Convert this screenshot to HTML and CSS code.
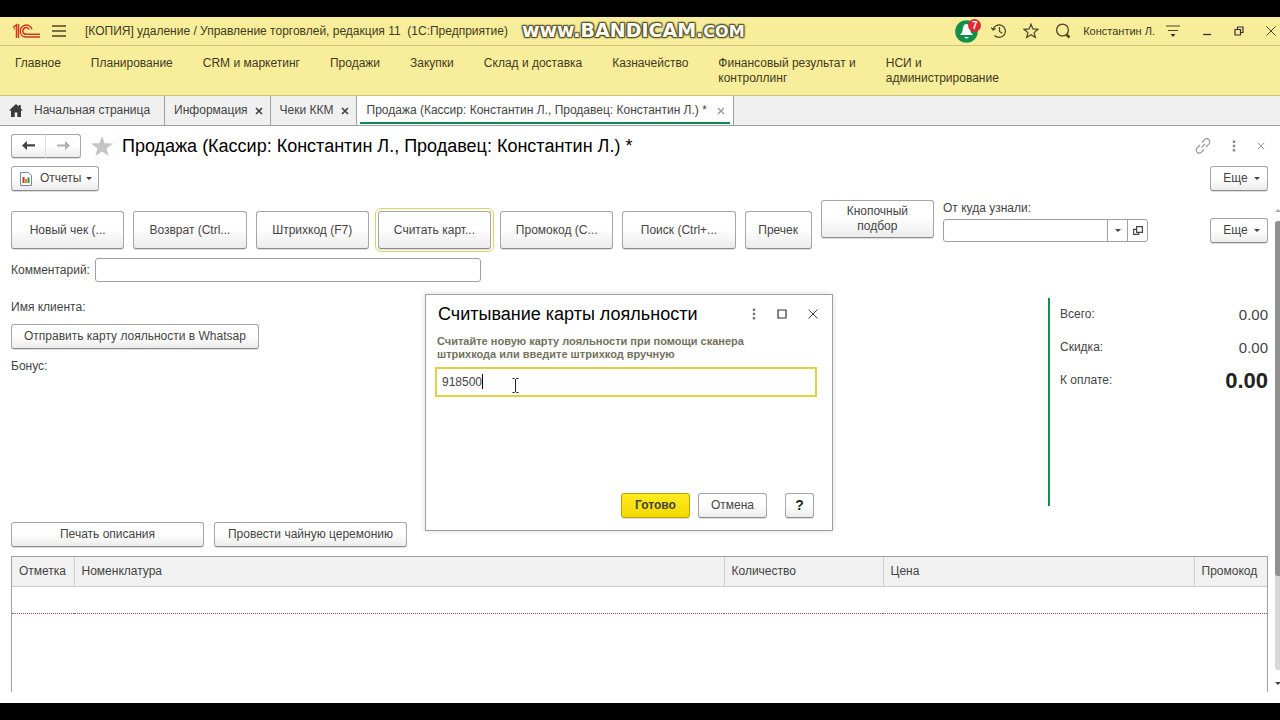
FILE: index.html
```html
<!DOCTYPE html>
<html lang="ru">
<head>
<meta charset="utf-8">
<title>Продажа</title>
<link rel="stylesheet" href="styles.css">
</head>
<body>
<div class="app">
  <header class="titlebar">
    <svg class="logo" width="28" height="16" viewBox="0 0 28 16" fill="none" stroke="#d2391f" stroke-width="1.5"><path d="M1 4.5 4.5 1.8V15M2 6.2l1-.6M6.5 15V1"/><path d="M20 6.2A6 6 0 1 0 14.500 14H28"/><path d="M17.300 6.500A3.400 3.400 0 1 0 14.500 11.300H28"/></svg>
    <button class="plain menu" aria-label="Меню"><svg width="14" height="12" viewBox="0 0 14 12" stroke="#4a4524" stroke-width="1.3"><path d="M0 1h14M0 6h14M0 11h14"/></svg></button>
    <span class="app-title">[КОПИЯ] удаление / Управление торговлей, редакция 11&nbsp; (1С:Предприятие)</span>
    <span class="watermark"><span>www.</span><b>BANDICAM</b><span>.</span><small>COM</small></span>
    <div class="tools">
      <button class="plain bell" aria-label="Уведомления"><svg width="24" height="24" viewBox="0 0 24 24"><circle cx="11.500" cy="12.500" r="11.300" fill="#12904a"/><path d="M11.500 5c3 0 3.500 3 3.800 6 .3 2.600 1.500 3.500 2.900 5H4.800c1.400-1.500 2.600-2.400 2.900-5 .3-3 .8-6 3.800-6z" fill="#fff"/><path d="M9.200 18h4.600q-2.300 3-4.600 0z" fill="#fff"/></svg><span class="badge">7</span></button>
      <button class="plain" aria-label="История"><svg width="16" height="16" viewBox="0 0 16 16" fill="none" stroke="#4a4524" stroke-width="1.200"><path d="M2 6.500A6.300 6.300 0 1 1 3.500 12.500M.3 4.500 2 7l2.700-1.500M8.500 4v4.500l2.700 1.700"/></svg></button>
      <button class="plain" aria-label="Избранное"><svg width="16" height="16" viewBox="0 0 16 16" fill="none" stroke="#4a4524" stroke-width="1.200"><path d="m8 1.200 1.900 4.700 5 .4-3.800 3.300 1.200 4.900L8 11.800l-4.300 2.700 1.200-4.900L1.100 6.300l5-.4z"/></svg></button>
      <button class="plain" aria-label="Поиск"><svg width="16" height="16" viewBox="0 0 16 16" fill="none" stroke="#4a4524" stroke-width="1.300"><circle cx="7.500" cy="7" r="5.900"/><path d="m11.500 11.500 3 3" stroke-width="2.500"/></svg></button>
      <a class="user" href="#">Константин Л.</a>
      <button class="plain" aria-label="Настройки"><svg width="14" height="14" viewBox="0 0 14 14"><path d="M0 2h14M2 6.500h10" stroke="#4a4524" stroke-width="1.200"/><path d="M4.500 10h5L7 13z" fill="#333"/></svg></button>
      <button class="plain win" aria-label="Свернуть"><svg width="10" height="10" viewBox="0 0 10 10" stroke="#333"><path d="M1 8.500h8" stroke-width="1.300"/></svg></button>
      <button class="plain win" aria-label="Восстановить"><svg width="10" height="10" viewBox="0 0 10 10" fill="none" stroke="#333" stroke-width="1.200"><path d="M1 3.500h5.500V9H1zM3.500 3.500V1H9v5.500H6.500"/></svg></button>
      <button class="plain win" aria-label="Закрыть"><svg width="10" height="10" viewBox="0 0 10 10" stroke="#4a4524"><path d="m.5.5 9 9M9.500.5l-9 9"/></svg></button>
    </div>
  </header>

  <nav class="sections">
    <a href="#">Главное</a><a href="#">Планирование</a><a href="#">CRM и маркетинг</a><a href="#">Продажи</a><a href="#">Закупки</a><a href="#">Склад и доставка</a><a href="#">Казначейство</a><a href="#">Финансовый результат и<br>контроллинг</a><a href="#">НСИ и<br>администрирование</a>
  </nav>

  <div class="tabs">
    <a class="tab home" href="#"><svg width="14" height="13" viewBox="0 0 14 13" fill="#3c3c3c"><path d="M7 0 0 6.500h2V13h3.700V8.500h2.600V13H12V6.500h2L11.800 4.400V1H9.900v1.600z"/></svg>Начальная страница</a>
    <div class="tab"><a href="#">Информация</a><button class="plain x" aria-label="Закрыть вкладку"><svg width="8" height="8" viewBox="0 0 8 8" stroke="#444" stroke-width="1.700"><path d="m1 1 6 6M7 1 1 7"/></svg></button></div>
    <div class="tab"><a href="#">Чеки ККМ</a><button class="plain x" aria-label="Закрыть вкладку"><svg width="8" height="8" viewBox="0 0 8 8" stroke="#444" stroke-width="1.700"><path d="m1 1 6 6M7 1 1 7"/></svg></button></div>
    <div class="tab active"><a href="#">Продажа (Кассир: Константин Л., Продавец: Константин Л.) *</a><button class="plain x" aria-label="Закрыть вкладку"><svg width="8" height="8" viewBox="0 0 8 8" stroke="#999" stroke-width="1.400"><path d="m1 1 6 6M7 1 1 7"/></svg></button></div>
  </div>

  <main class="page">
    <div class="row heading">
      <div class="history">
        <button class="btn" aria-label="Назад"><svg width="13" height="9" viewBox="0 0 13 9" fill="#444"><path d="M0 4.500 5 0v3.300h8v2.300H5V9z"/></svg></button><button class="btn" aria-label="Вперед"><svg width="13" height="9" viewBox="0 0 13 9" fill="#b0b0b0"><path d="M13 4.500 8 0v3.600H0v1.800h8V9z"/></svg></button>
      </div>
      <button class="plain" aria-label="В избранное"><svg width="22" height="20" viewBox="0 0 22 20" fill="#c4c4c4"><path d="m11 0 2.700 7.300L22 7.600l-6.500 4.800L17.700 20 11 15.600 4.300 20l2.200-7.600L0 7.600l8.300-.3z"/></svg></button>
      <h1>Продажа (Кассир: Константин Л., Продавец: Константин Л.) *</h1>
      <div class="page-tools">
        <button class="plain" aria-label="Ссылка"><svg width="16" height="16" viewBox="0 0 16 16" fill="none" stroke="#999" stroke-width="1.200"><path d="M6.500 9.500 10 6M7 4.500l2.500-2.700a2.800 2.800 0 0 1 4.500 4L11 9M9 11.500l-2.500 2.700a2.800 2.800 0 0 1-4.500-4L5 7"/></svg></button>
        <button class="plain" aria-label="Еще действия"><svg width="4" height="12" viewBox="0 0 4 12" fill="#888"><path d="M.8.500h2.400v2.400H.8zM.8 4.800h2.400v2.400H.8zM.8 9.100h2.400v2.400H.8z"/></svg></button>
        <button class="plain" aria-label="Закрыть"><svg width="8" height="8" viewBox="0 0 8 8" stroke="#999"><path d="m.8.8 6.400 6.400M7.200.8.8 7.200"/></svg></button>
      </div>
    </div>

    <div class="row reports">
      <button class="btn report"><svg width="12" height="14" viewBox="0 0 12 14"><path d="M.5.500h8l3 3v10H.5z" fill="#fff" stroke="#7b8a98"/><path d="M2.500 5h2v6h-2z" fill="#c33"/><path d="M5 7h2v4H5z" fill="#e08a20"/><path d="M7.500 5.500h2V11h-2z" fill="#3a8a4a"/></svg>Отчеты<i class="caret"></i></button>
      <button class="btn more">Еще<i class="caret"></i></button>
    </div>

    <div class="workspace">
      <div class="form">
        <div class="commands">
          <div class="command-grid">
            <button class="btn tall">Новый чек (...</button>
            <button class="btn tall">Возврат (Ctrl...</button>
            <button class="btn tall">Штрихкод (F7)</button>
            <button class="btn tall current">Считать карт...</button>
            <button class="btn tall">Промокод (C...</button>
            <button class="btn tall">Поиск (Ctrl+...</button>
            <button class="btn tall narrow">Пречек</button>
            <button class="btn tall raised">Кнопочный<br>подбор</button>
            <div class="source">
              <label for="source">От куда узнали:</label>
              <div class="combo"><input id="source" type="text"><button class="plain" aria-label="Выбрать"><i class="caret"></i></button><button class="plain" aria-label="Открыть"><svg width="10" height="10" viewBox="0 0 10 10" fill="none" stroke="#444" stroke-width="1.200"><path d="M3.600.6h5.800v5.800H3.600zM3.600 3.400h-3v5h5v-2"/></svg></button></div>
            </div>
          </div>
          <button class="btn more">Еще<i class="caret"></i></button>
        </div>

        <div class="comment">
          <label for="comment">Комментарий:</label>
          <input id="comment" class="field" type="text">
        </div>

        <div class="middle">
          <div class="client">
            <span>Имя клиента:</span>
            <button class="btn">Отправить карту лояльности в Whatsap</button>
            <span>Бонус:</span>
          </div>
          <dl class="totals">
            <div><dt>Всего:</dt><dd>0.00</dd></div>
            <div><dt>Скидка:</dt><dd>0.00</dd></div>
            <div><dt>К оплате:</dt><dd class="due">0.00</dd></div>
          </dl>
        </div>

        <div class="actions">
          <button class="btn">Печать описания</button>
          <button class="btn">Провести чайную церемонию</button>
        </div>

        <div class="table-box">
          <table>
            <colgroup><col class="c-mark"><col class="c-name"><col class="c-qty"><col class="c-price"><col class="c-promo"></colgroup>
            <thead><tr><th>Отметка</th><th>Номенклатура</th><th>Количество</th><th>Цена</th><th>Промокод</th></tr></thead>
            <tbody><tr><td></td><td></td><td></td><td></td><td></td></tr></tbody>
          </table>
        </div>
      </div>
      <div class="scroll"><i class="up"></i><div class="track"><div class="thumb"></div></div><i class="down"></i></div>
    </div>
  </main>

  <section class="dialog" role="dialog" aria-labelledby="dlg-title">
    <div class="dialog-head">
      <h2 id="dlg-title">Считывание карты лояльности</h2>
      <button class="plain" aria-label="Еще действия"><svg width="4" height="12" viewBox="0 0 4 12" fill="#777"><path d="M.8.500h2.400v2.400H.8zM.8 4.800h2.400v2.400H.8zM.8 9.100h2.400v2.400H.8z"/></svg></button>
      <button class="plain" aria-label="Развернуть"><svg width="10" height="10" viewBox="0 0 10 10" fill="none" stroke="#333" stroke-width="1.200"><path d="M1 1h8v8H1z"/></svg></button>
      <button class="plain" aria-label="Закрыть"><svg width="10" height="10" viewBox="0 0 10 10" stroke="#444"><path d="m.5.5 9 9M9.500.5l-9 9"/></svg></button>
    </div>
    <label class="hint" for="barcode">Считайте новую карту лояльности при помощи сканера<br>штрихкода или введите штрихкод вручную</label>
    <div class="barcode">
      <input id="barcode" type="text" value="918500">
      <i class="text-caret"></i>
      <svg class="pointer" width="7" height="15" viewBox="0 0 7 15" fill="none" stroke="#222"><path d="M.5.500h2l1 1 1-1h2M3.500 1v13M.5 14.500h2l1-1 1 1h2"/></svg>
    </div>
    <div class="dialog-foot">
      <button class="btn primary">Готово</button>
      <button class="btn">Отмена</button>
      <button class="btn help">?</button>
    </div>
  </section>
</div>
</body>
</html>
```
FILE: styles.css
```css
* { box-sizing: border-box; }

body {
  margin: 0;
  background: #000;
  color: #444;
  font: 12px/15px "Liberation Sans", Arial, sans-serif;
}

.app {
  position: relative;
  display: flex;
  flex-direction: column;
  min-height: 100vh;
  padding: 17px 0;
  overflow: hidden;
}

a { color: inherit; text-decoration: none; }
svg { display: block; flex: none; }
button, input { font: inherit; color: inherit; }
h1, h2, dl, dd { margin: 0; font-weight: normal; }

.plain {
  display: flex;
  align-items: center;
  justify-content: center;
  padding: 0;
  border: 0;
  background: none;
}

.btn {
  display: flex;
  align-items: center;
  justify-content: center;
  height: 25px;
  padding: 0 12px;
  border: 1px solid #a6a6a6;
  border-bottom-color: #8c8c8c;
  border-radius: 3px;
  background: linear-gradient(#fff 45%, #ececec);
  box-shadow: 0 1px 0 #ddd;
  white-space: nowrap;
}

.caret {
  border: 3px solid transparent;
  border-top-color: #444;
  border-bottom: 0;
}

/* Window title */
.titlebar {
  display: flex;
  align-items: center;
  height: 29px;
  padding: 0 4px 0 12px;
  border-bottom: 1px solid #cfc478;
  background: #f8ed9a;
  color: #3f3b20;
}

.menu { margin: 0 19px 0 12px; }
.app-title { white-space: nowrap; }

.watermark {
  margin-left: 14px;
  color: #fffdf0;
  font: bold 19px/20px "DejaVu Sans", sans-serif;
  white-space: nowrap;
  text-shadow: 1px 1px 1px #55502c, -1px -1px 1px #55502c, 1px -1px 1px #55502c, -1px 1px 1px #55502c, 0 0 3px #55502c;
}

.watermark small { font-size: 16px; }

.tools {
  display: flex;
  align-items: center;
  gap: 16px;
  margin-left: auto;
}

.bell { position: relative; margin-right: -4px; }

.badge {
  position: absolute;
  top: 0;
  right: -2px;
  width: 13px;
  height: 13px;
  border-radius: 50%;
  background: #e0282e;
  color: #fff;
  font: bold 10px/13px "Liberation Sans", Arial, sans-serif;
}

.user { margin: 0 -5px 0 -4px; font-size: 11px; }
.win { margin-left: 6px; }
.win:first-of-type { margin-left: 4px; }

/* Sections */
.sections {
  display: flex;
  gap: 30px;
  height: 50px;
  padding: 10px 15px 0;
  border-bottom: 1px solid #cfc478;
  background: #f8ed9a;
  color: #3f3b20;
  white-space: nowrap;
}

/* Open windows */
.tabs {
  display: flex;
  height: 30px;
  border-bottom: 1px solid #a0a0a0;
  background: #f0f0f0;
}

.tab {
  display: flex;
  align-items: center;
  gap: 7px;
  padding: 0 7px 0 9px;
  border-right: 1px solid #a0a0a0;
  white-space: nowrap;
}

.home { gap: 11px; padding: 0 14px 0 9px; }

.active {
  gap: 10px;
  padding: 0 8px 0 10px;
  background: linear-gradient(#0c8a50, #0c8a50) 3px 26px / calc(100% - 6px) 2px no-repeat #fff;
}

/* Page */
.page {
  display: flex;
  flex: 1;
  flex-direction: column;
  padding-top: 7px;
  background: #fff;
}

.row { display: flex; align-items: center; padding: 0 12px 0 11px; }
.heading { height: 25px; }
.history { display: flex; margin-right: 10px; }
.history .btn { width: 35px; height: 24px; padding: 0; }
.history .btn:first-child { border-right-color: #ddd; border-radius: 3px 0 0 3px; }
.history .btn:last-child { border-left: 0; border-radius: 0 3px 3px 0; }

h1 {
  margin-left: 9px;
  color: #000;
  font-size: 18px;
  line-height: 20px;
  white-space: nowrap;
}

.page-tools { display: flex; align-items: center; gap: 21px; margin: 0 3px 0 auto; }

.reports { justify-content: space-between; margin-top: 8px; }
.report { gap: 8px; padding: 0 6px 0 8px; }
.report .caret { margin-left: -3px; }
.more { gap: 6px; width: 58px; padding: 0 5px 0 10px; }

.workspace { display: flex; flex: 1; margin-top: 8px; }
.form { display: flex; flex: 1; flex-direction: column; min-width: 0; padding: 0 7px 0 11px; }

.commands { display: flex; align-items: flex-start; justify-content: space-between; gap: 20px; }
.commands > .more { margin-top: 19px; }

.command-grid {
  display: grid;
  flex: 0 1 1137px;
  grid-template-columns: repeat(6, 113fr) 67fr 113fr 204fr;
  column-gap: 9px;
  align-items: start;
}

.tall { height: 38px; margin-top: 12px; padding: 0 4px; }
.raised { margin-top: 1px; }
.current { outline: 1px solid #dcd25c; outline-offset: 2px; }

.source { display: flex; flex-direction: column; gap: 3px; padding-top: 2px; }

.combo {
  display: flex;
  height: 23px;
  border: 1px solid #a0a0a0;
  border-radius: 3px;
}

.combo input { flex: 1; min-width: 0; padding: 0 4px; border: 0; background: none; }
.combo button { width: 20px; border-left: 1px solid #a0a0a0; }

.comment { display: flex; align-items: center; gap: 5px; margin-top: 9px; }

.field {
  width: 386px;
  height: 24px;
  padding: 0 6px;
  border: 1px solid #a0a0a0;
  border-radius: 3px;
}

.middle { display: flex; justify-content: space-between; margin-top: 16px; }
.client { display: flex; flex-direction: column; align-items: flex-start; gap: 9px; padding-top: 2px; }
.client .btn { margin-bottom: 1px; }

.totals {
  width: 220px;
  min-height: 208px;
  padding-left: 10px;
  border-left: 2px solid #12904a;
}

.totals div { display: flex; align-items: center; justify-content: space-between; height: 33px; }
.totals dd { font-size: 15px; }
.totals .due { color: #222; font-size: 22px; font-weight: bold; }

.actions { display: flex; gap: 10px; margin-top: 16px; }
.actions .btn { width: 193px; }

.table-box {
  flex: 1;
  margin: 9px 0 11px;
  border: 1px solid #a0a0a0;
  border-bottom: 0;
}

table { width: 100%; border-collapse: collapse; table-layout: fixed; }
.c-mark { width: 62px; }
.c-qty { width: 159px; }
.c-price { width: 311px; }
.c-promo { width: 73px; }

th {
  height: 29px;
  padding: 0 7px;
  border-bottom: 1px solid #ccc;
  border-left: 1px solid #d0d0d0;
  background: #f1f1f1;
  font-weight: normal;
  text-align: left;
}

th:first-child { border-left: 0; }
td { height: 27px; padding: 0; border-bottom: 1px dotted #b0504c; }

.scroll { display: flex; flex-direction: column; align-items: center; width: 5px; padding: 10px 0 18px; }
.up { border: 3px solid transparent; border-top: 0; border-bottom-color: #aaa; }
.track { display: flex; flex: 1; width: 5px; margin: 9px 0 12px; border-radius: 3px 0 0 3px; background: #d8d8d8; }
.thumb { width: 5px; height: 79%; border-radius: 3px 0 0 3px; background: #909090; }
.down { border: 3px solid transparent; border-bottom: 0; border-top-color: #444; }

/* Dialog */
.dialog {
  position: absolute;
  top: 294px;
  left: 425px;
  display: flex;
  flex-direction: column;
  width: 408px;
  height: 237px;
  padding: 9px 15px 12px 9px;
  border: 1px solid #a0a0a0;
  background: #fff;
  box-shadow: 0 0 6px rgba(0, 0, 0, .15);
}

.dialog-head { display: flex; align-items: center; gap: 21px; padding-left: 3px; }
.dialog-head button:last-child { margin-right: -1px; }

h2 {
  margin-right: auto;
  color: #000;
  font-size: 18px;
  line-height: 20px;
}

.hint { margin: 11px 2px 6px; color: #72725c; font-size: 11px; font-weight: bold; line-height: 13px; }

.barcode { position: relative; }

.barcode input {
  display: block;
  width: 100%;
  height: 30px;
  padding: 0 5px;
  border: 2px solid #e0d243;
  outline: 0;
}

.text-caret { position: absolute; top: 7px; left: 47px; width: 1px; height: 15px; background: #000; }
.pointer { position: absolute; top: 11px; left: 77px; }

.dialog-foot { display: flex; justify-content: flex-end; gap: 8px; margin: auto 3px 0 0; }
.dialog-foot .btn { width: 69px; }
.dialog-foot .primary { border-color: #b5a300; background: linear-gradient(#ffea20, #f2d900); font-weight: bold; }
.dialog-foot .help { width: 29px; margin-left: 10px; padding: 0; color: #222; font-size: 14px; font-weight: bold; }
```
